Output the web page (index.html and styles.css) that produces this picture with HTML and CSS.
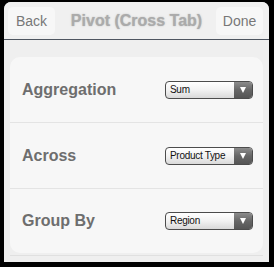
FILE: index.html
```html
<!DOCTYPE html>
<html>
<head>
<meta charset="utf-8">
<link rel="stylesheet" href="styles.css">
</head>
<body>
<div class="frame">
  <div class="header">
    <div class="btn">Back</div>
    <div class="title">Pivot (Cross Tab)</div>
    <div class="btn">Done</div>
  </div>
  <div class="content">
    <div class="panel">
      <div class="row">
        <div class="label">Aggregation</div>
        <div class="select"><span class="value">Sum</span><span class="arrow"></span></div>
      </div>
      <div class="row">
        <div class="label">Across</div>
        <div class="select"><span class="value">Product Type</span><span class="arrow"></span></div>
      </div>
      <div class="row last">
        <div class="label">Group By</div>
        <div class="select"><span class="value">Region</span><span class="arrow"></span></div>
      </div>
    </div>
    <div class="underline"></div>
  </div>
</div>
</body>
</html>
```
FILE: styles.css
```css
html, body {
  margin: 0;
  padding: 0;
  height: 267px;
  background: #000;
  overflow: hidden;
}
body {
  padding: 2px 5px 5px 4px;
  box-sizing: border-box;
  font-family: "Liberation Sans", Arial, sans-serif;
}
.frame {
  height: 260px;
  background: #efefef;
  border-radius: 7px 7px 0 0;
  overflow: hidden;
}
.header {
  height: 37px;
  border-bottom: 1px solid #4e5560;
  display: flex;
  align-items: flex-start;
  justify-content: space-between;
  padding: 5px 6px 0 4px;
  box-sizing: content-box;
  box-sizing: border-box;
  height: 38px;
  background: #f0f0f0;
}
.btn {
  width: 47px;
  height: 28px;
  background: #f7f7f7;
  border-radius: 5px;
  color: #777;
  font-size: 14px;
  display: flex;
  align-items: center;
  justify-content: center;
}
.title {
  font-weight: bold;
  font-size: 16px;
  color: #ababab;
  text-shadow: 0 0 1.5px rgba(120,120,120,0.5);
  line-height: 28px;
  margin-left: 2px;
}
.content {
  padding: 17px 6px 0 6px;
}
.panel {
  background: #f7f7f7;
  border-radius: 10px;
}
.row {
  height: 65px;
  border-bottom: 1px solid #e4e4e4;
  display: flex;
  align-items: center;
  justify-content: space-between;
  padding: 0 10px 0 12px;
}
.row.last {
  height: 64px;
  border-bottom: none;
}
.label {
  font-weight: bold;
  font-size: 16px;
  color: #6e6e6e;
}
.select {
  width: 88px;
  height: 18px;
  box-sizing: border-box;
  border: 1px solid #4c4c4c;
  border-radius: 4px;
  display: flex;
  overflow: hidden;
  background: linear-gradient(#ffffff, #f2f2f2 50%, #d9d9d9);
}
.value {
  flex: 1;
  font-size: 10px;
  letter-spacing: -0.3px;
  color: #111;
  padding-left: 4px;
  line-height: 16px;
}
.arrow {
  width: 18px;
  background: linear-gradient(#8c8c8c, #666 50%, #555);
  position: relative;
}
.arrow::after {
  content: "";
  position: absolute;
  left: 6px;
  top: 5px;
  border-left: 3.5px solid transparent;
  border-right: 3.5px solid transparent;
  border-top: 6px solid #fff;
}
.underline {
  margin-top: 2px;
  height: 1px;
  background: #e0e0e0;
}
```
